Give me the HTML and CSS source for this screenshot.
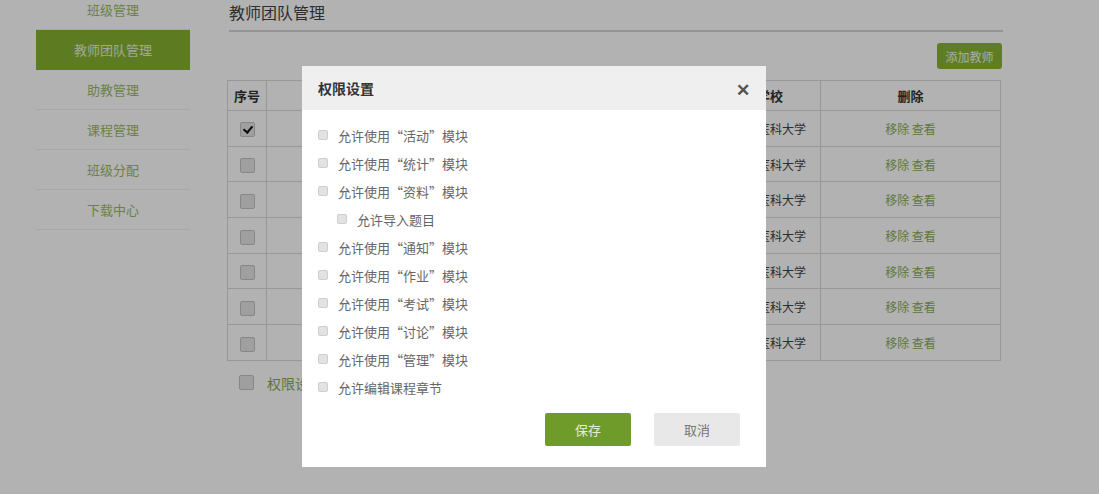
FILE: index.html
```html
<!DOCTYPE html>
<html lang="zh-CN">
<head>
    <meta charset="UTF-8">
    <title>教师团队管理</title>
    <link rel="stylesheet" href="styles.css">
</head>
<body>
    <div class="page">
        <ul class="side">
            <li>班级管理</li>
            <li class="active">教师团队管理</li>
            <li>助教管理</li>
            <li>课程管理</li>
            <li>班级分配</li>
            <li>下载中心</li>
        </ul>

        <div class="main">
            <h2 class="title">教师团队管理</h2>
            <div class="toolbar">
                <button class="btn-add">添加教师</button>
            </div>
            <!-- 被弹窗遮住的几列留空 -->
            <table class="list">
                <thead>
                    <tr>
                        <th class="c-no">序号</th>
                        <th class="c-name"></th>
                        <th class="c-phone"></th>
                        <th class="c-title"></th>
                        <th class="c-school">学校</th>
                        <th class="c-op">删除</th>
                    </tr>
                </thead>
                <tbody>
                    <tr>
                        <td><span class="box checked"></span></td>
                        <td></td><td></td><td></td>
                        <td>某某医科大学</td>
                        <td><a class="op">移除</a> <a class="op">查看</a></td>
                    </tr>
                    <tr>
                        <td><span class="box"></span></td>
                        <td></td><td></td><td></td>
                        <td>某某医科大学</td>
                        <td><a class="op">移除</a> <a class="op">查看</a></td>
                    </tr>
                    <tr>
                        <td><span class="box"></span></td>
                        <td></td><td></td><td></td>
                        <td>某某医科大学</td>
                        <td><a class="op">移除</a> <a class="op">查看</a></td>
                    </tr>
                    <tr>
                        <td><span class="box"></span></td>
                        <td></td><td></td><td></td>
                        <td>某某医科大学</td>
                        <td><a class="op">移除</a> <a class="op">查看</a></td>
                    </tr>
                    <tr>
                        <td><span class="box"></span></td>
                        <td></td><td></td><td></td>
                        <td>某某医科大学</td>
                        <td><a class="op">移除</a> <a class="op">查看</a></td>
                    </tr>
                    <tr>
                        <td><span class="box"></span></td>
                        <td></td><td></td><td></td>
                        <td>某某医科大学</td>
                        <td><a class="op">移除</a> <a class="op">查看</a></td>
                    </tr>
                    <tr>
                        <td><span class="box"></span></td>
                        <td></td><td></td><td></td>
                        <td>某某医科大学</td>
                        <td><a class="op">移除</a> <a class="op">查看</a></td>
                    </tr>
                </tbody>
            </table>
            <div class="foot">
                <span class="box"></span>
                <a class="foot-link">权限设置</a>
            </div>
        </div>
    </div>

    <div class="mask"></div>

    <!-- 权限设置弹窗 -->
    <div class="dialog">
        <div class="dialog-hd">
            <span>权限设置</span>
            <span class="close">✕</span>
        </div>
        <ul class="perm">
            <li><span class="cb"></span>允许使用“活动”模块</li>
            <li><span class="cb"></span>允许使用“统计”模块</li>
            <li><span class="cb"></span>允许使用“资料”模块</li>
            <li class="sub"><span class="cb"></span>允许导入题目</li>
            <li><span class="cb"></span>允许使用“通知”模块</li>
            <li><span class="cb"></span>允许使用“作业”模块</li>
            <li><span class="cb"></span>允许使用“考试”模块</li>
            <li><span class="cb"></span>允许使用“讨论”模块</li>
            <li><span class="cb"></span>允许使用“管理”模块</li>
            <li><span class="cb"></span>允许编辑课程章节</li>
        </ul>
        <div class="dialog-ft">
            <button class="btn-save">保存</button>
            <button class="btn-cancel">取消</button>
        </div>
    </div>
</body>
</html>
```

FILE: styles.css
```css
body {
    margin: 0;
    background: #fff;
    font-family: "Microsoft YaHei", "Noto Sans CJK SC", sans-serif;
    color: #333;
    overflow: hidden;
}

ul {
    list-style: none;
    margin: 0;
    padding: 0;
}

.page {
    display: flex;
    align-items: flex-start;
}

/* 左侧菜单 */
.side {
    width: 154px;
    margin: -10px 0 0 36px;
}

.side li {
    height: 39px;
    line-height: 39px;
    text-align: center;
    font-size: 13px;
    color: #9bb86c;
    border-bottom: 1px solid #f0f0f0;
}

.side li.active {
    background: #86b232;
    color: #e8f0d8;
    border-bottom-color: #86b232;
}

/* 主体 */
.main {
    width: 774px;
    margin-left: 39px;
}

.title {
    margin: 0;
    height: 30px;
    line-height: 24px;
    font-size: 16px;
    font-weight: normal;
    color: #444;
    border-bottom: 2px solid #d4d4d4;
}

.toolbar {
    display: flex;
    justify-content: flex-end;
    padding: 11px 1px 0 0;
}

.btn-add {
    width: 65px;
    height: 26px;
    border: 0;
    border-radius: 3px;
    background: #88b432;
    color: #f2f7e8;
    font: 12px "Noto Sans CJK SC", sans-serif;
    padding: 0;
}

.list {
    width: 774px;
    margin: 11px 0 0 -2px;
    border-collapse: collapse;
    table-layout: fixed;
    font-size: 12px;
}

.list th,
.list td {
    border: 1px solid #dadada;
    text-align: center;
    padding: 0;
    white-space: nowrap;
    overflow: hidden;
}

.list th {
    height: 29px;
    font-size: 13px;
    font-weight: bold;
    color: #333;
}

.list td {
    height: 34.7px;
    color: #444;
}

.c-no { width: 38px; }
.c-name { width: 150px; }
.c-phone { width: 150px; }
.c-title { width: 150px; }
.c-school { width: 100px; }
.c-op { width: 179px; }

.op {
    color: #8aab56;
}

.box {
    display: inline-block;
    width: 13px;
    height: 13px;
    border: 1px solid #c2c2c2;
    border-radius: 2px;
    background: #e4e4e4;
    vertical-align: middle;
    position: relative;
}

.box.checked::after {
    content: "";
    position: absolute;
    left: 4px;
    top: 1px;
    width: 4px;
    height: 7px;
    border: solid #111;
    border-width: 0 2px 2px 0;
    transform: rotate(40deg);
}

.foot {
    display: flex;
    align-items: center;
    gap: 13px;
    padding: 12px 0 0 10px;
}

.foot-link {
    font-size: 14px;
    color: #86a852;
}

/* 遮罩 */
.mask {
    position: fixed;
    left: 0;
    top: 0;
    right: 0;
    bottom: 0;
    background: rgba(0, 0, 0, 0.3);
}

/* 弹窗 */
.dialog {
    position: fixed;
    left: 302px;
    top: 66px;
    width: 464px;
    height: 401px;
    background: #fff;
}

.dialog-hd {
    height: 44px;
    background: #efefef;
    display: flex;
    align-items: center;
    justify-content: space-between;
    padding: 0 16px;
    font-size: 14px;
    font-weight: bold;
    color: #333;
}

.close {
    font-size: 17px;
    color: #555;
}

.perm {
    padding: 11px 0 0 16px;
}

.perm li {
    height: 28px;
    display: flex;
    align-items: center;
    font-size: 13px;
    color: #666;
}

.perm li.sub {
    padding-left: 19px;
}

.cb {
    width: 8px;
    height: 8px;
    border: 1px solid #cfcfcf;
    border-radius: 2px;
    background: #e2e2e2;
    margin: 0 10px 0 0;
}

.dialog-ft {
    display: flex;
    justify-content: flex-end;
    gap: 23px;
    padding: 12px 26px 0 0;
}

.dialog-ft button {
    width: 86px;
    height: 33px;
    border: 0;
    border-radius: 2px;
    font: 13px "Noto Sans CJK SC", sans-serif;
}

.btn-save {
    background: #6f9b2b;
    color: #e4eed4;
}

.btn-cancel {
    background: #e8e8e8;
    color: #777;
}
```
